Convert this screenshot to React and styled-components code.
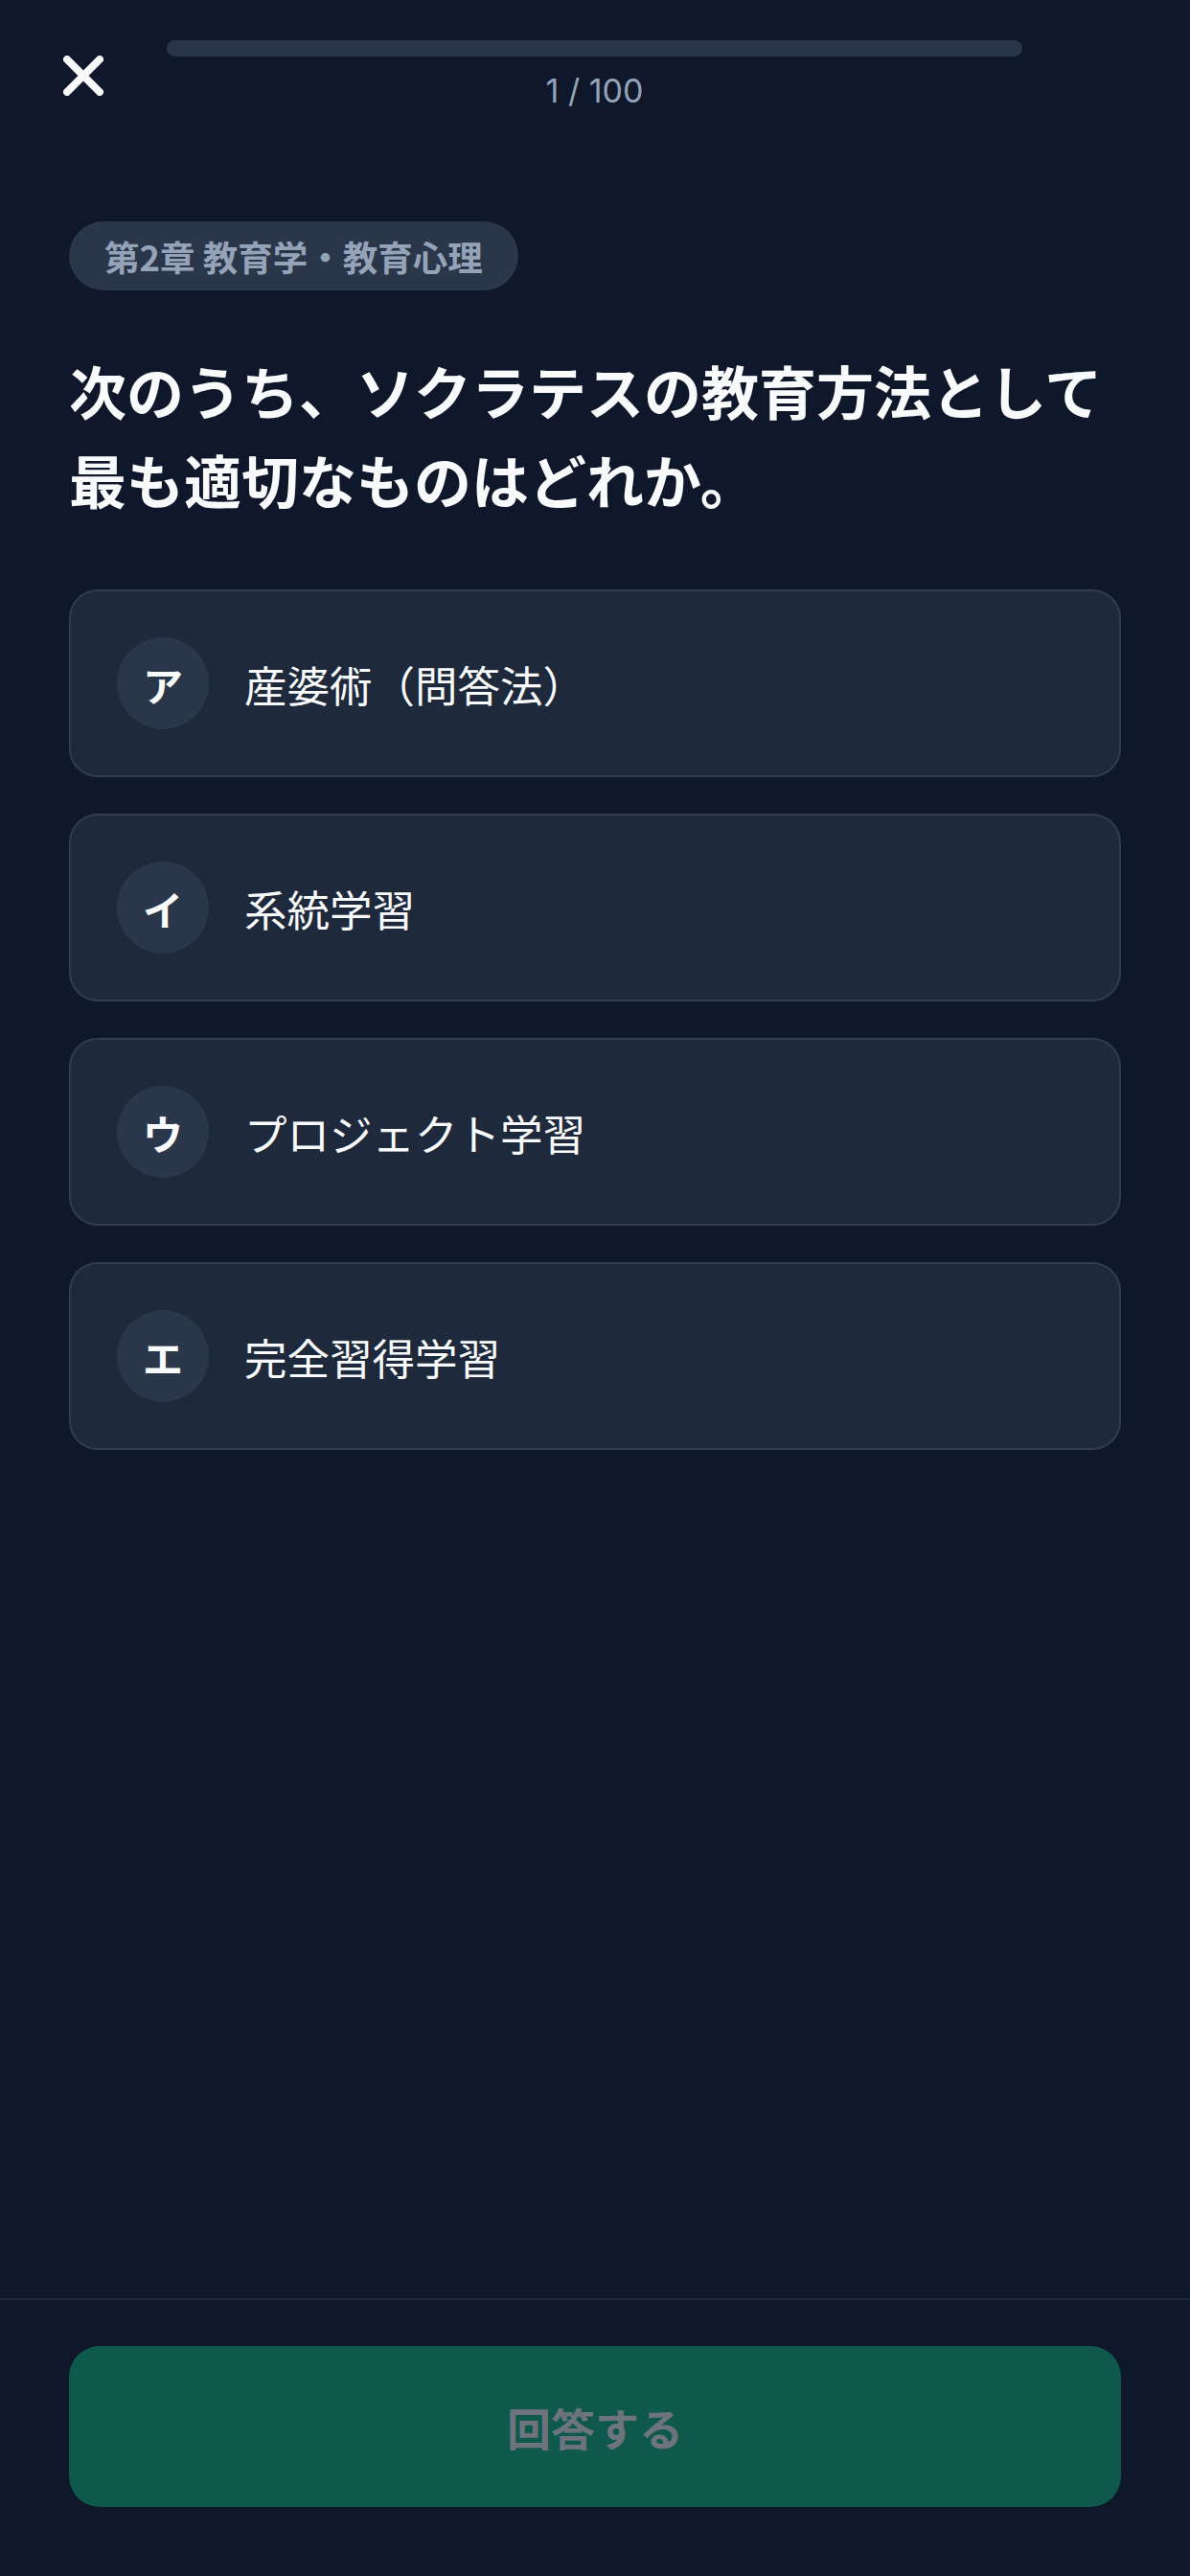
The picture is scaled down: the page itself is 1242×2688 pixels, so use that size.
import React from 'react';
import styled, { createGlobalStyle } from 'styled-components';

const GlobalStyle = createGlobalStyle`
  html, body {
    margin: 0;
    padding: 0;
    background: #0f172a;
  }
  body {
    font-family: "Noto Sans CJK JP", "Noto Sans", sans-serif;
    color: #f8fafc;
  }
  * { box-sizing: border-box; }
`;

const Screen = styled.div`
  min-height: 100vh;
  display: flex;
  flex-direction: column;
  background: #0f172a;
`;

const Header = styled.header`
  display: grid;
  grid-template-columns: 174px 1fr 175px;
  align-items: center;
  padding-top: 42px;
`;

const CloseButton = styled.button`
  justify-self: center;
  display: flex;
  align-items: center;
  justify-content: center;
  width: 60px;
  height: 60px;
  padding: 0;
  border: none;
  background: transparent;
  color: #f8fafc;
  cursor: pointer;
`;

const ProgressBlock = styled.div`
  display: flex;
  flex-direction: column;
  align-items: center;
`;

const Track = styled.div`
  width: 100%;
  height: 17px;
  border-radius: 9px;
  background: #293548;
  overflow: hidden;
`;

const Fill = styled.div`
  height: 100%;
  background: #10b981;
`;

const Count = styled.div`
  margin-top: 15px;
  font-family: Inter, "Noto Sans", sans-serif;
  font-size: 34px;
  line-height: 41px;
  color: #94a3b8;
`;

const Main = styled.main`
  flex: 1;
  display: flex;
  flex-direction: column;
  align-items: flex-start;
  padding: 116px 72px 0;
`;

const Chip = styled.span`
  display: inline-flex;
  align-items: center;
  height: 72px;
  padding: 0 37px;
  border-radius: 36px;
  background: #2a3649;
  color: #94a3b8;
  font-size: 36.5px;
  font-weight: 700;
  white-space: nowrap;
`;

const Question = styled.h1`
  margin: 57px 0 0;
  font-size: 60px;
  font-weight: 700;
  line-height: 93px;
  color: #f8fafc;
`;

const Options = styled.div`
  width: 100%;
  margin-top: 69px;
  display: flex;
  flex-direction: column;
  gap: 38px;
`;

const Option = styled.button`
  display: flex;
  align-items: center;
  gap: 37px;
  width: 100%;
  height: 196px;
  padding: 0 48px;
  border: 2.5px solid #303d50;
  border-radius: 30px;
  background: #1e293b;
  color: #f8fafc;
  font-family: inherit;
  text-align: left;
  cursor: pointer;
`;

const Letter = styled.span`
  flex: none;
  display: flex;
  align-items: center;
  justify-content: center;
  width: 96px;
  height: 96px;
  border-radius: 50%;
  background: #2a3649;
  font-size: 42px;
  font-weight: 700;
`;

const Label = styled.span`
  font-size: 44.5px;
  font-weight: 400;
`;

const Footer = styled.footer`
  border-top: 2.5px solid #1e293b;
  padding: 48px 72px 72px;
`;

const SubmitButton = styled.button`
  width: 100%;
  height: 168px;
  border: none;
  border-radius: 32px;
  background: #0f584c;
  color: #6e747d;
  font-family: inherit;
  font-size: 46px;
  font-weight: 700;
  cursor: not-allowed;
`;

const CloseIcon = () => (
  <svg width="42" height="42" viewBox="0 0 42 42" fill="none">
    <path d="M4 4L38 38M38 4L4 38" stroke="currentColor" strokeWidth="8" strokeLinecap="round" />
  </svg>
);

const choices = [
  { key: 'ア', text: '産婆術（問答法）' },
  { key: 'イ', text: '系統学習' },
  { key: 'ウ', text: 'プロジェクト学習' },
  { key: 'エ', text: '完全習得学習' },
];

const App = () => {
  const current = 1;
  const total = 100;

  return <Screen>
    <GlobalStyle />
    <Header>
      <CloseButton aria-label="閉じる"><CloseIcon /></CloseButton>
      <ProgressBlock>
        <Track>
          <Fill style={{ width: 0 }} />
        </Track>
        <Count>{current} / {total}</Count>
      </ProgressBlock>
    </Header>
    <Main>
      <Chip>第2章 教育学・教育心理</Chip>
      <Question>次のうち、ソクラテスの教育方法として最も適切なものはどれか。</Question>
      <Options>
        {choices.map(c => (
          <Option key={c.key}>
            <Letter>{c.key}</Letter>
            <Label>{c.text}</Label>
          </Option>
        ))}
      </Options>
    </Main>
    <Footer>
      <SubmitButton disabled>回答する</SubmitButton>
    </Footer>
  </Screen>;
};

export default App;
